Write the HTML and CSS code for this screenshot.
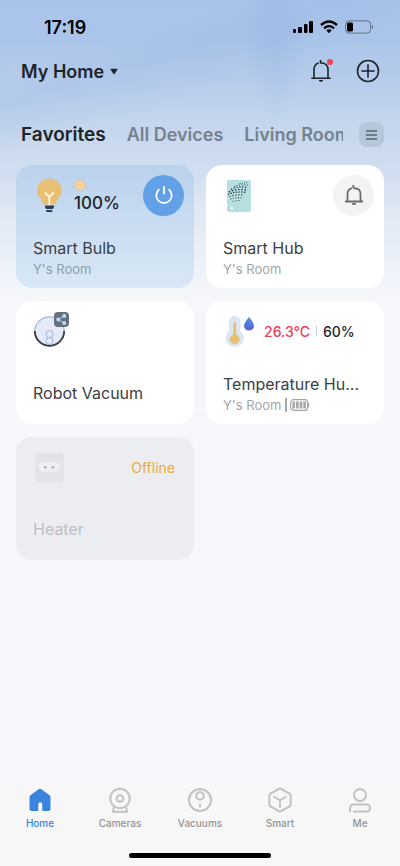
FILE: index.html
```html
<!DOCTYPE html>
<html lang="en">
<head>
<meta charset="utf-8">
<meta name="viewport" content="width=device-width, initial-scale=1">
<title>My Home</title>
<link rel="stylesheet" href="styles.css">
</head>
<body>
<div class="app">
  <div class="status">
    <span class="time">17:19</span>
    <div class="signals">
      <svg width="20" height="14" viewBox="0 0 20 14"><rect x="0" y="9" width="3" height="4" rx="1"/><rect x="5" y="7" width="4" height="6" rx="1"/><rect x="11" y="4" width="3.500" height="9" rx="1"/><rect x="16" y="1" width="4" height="12" rx="1"/></svg>
      <svg width="18" height="14" viewBox="0 0 18 14"><path d="M1 5Q9-2 17 5" fill="none" stroke="#000" stroke-width="2.400"/><path d="M4 8.300Q9 4 14 8.300" fill="none" stroke="#000" stroke-width="2.200"/><path d="M6.300 10.300Q9 8.300 11.700 10.300L9 13.200z"/></svg>
      <svg width="28" height="14" viewBox="0 0 28 14"><rect x=".6" y=".9" width="25" height="12.200" rx="3.500" fill="none" stroke="#000" stroke-opacity=".42"/><rect x="2" y="2.500" width="6" height="9" rx="1.500"/><path d="M27 5v4q1-.5 1-2t-1-2" fill-opacity=".5"/></svg>
    </div>
  </div>
  <header class="header">
    <button class="home-switch" type="button">My Home
      <svg width="8" height="7" viewBox="0 0 8 7"><path d="M1 .8h6q.8.300.4 1L4.600 5.800q-.6.700-1.200 0L.6 1.800q-.4-.7.400-1z" fill="#1d2529"/></svg>
    </button>
    <div class="actions">
      <button class="icon-button" type="button" aria-label="Notifications">
        <svg width="24" height="26" viewBox="0 0 24 26" fill="none" stroke="#1d2529" stroke-width="1.600"><path d="M2.300 20.200h19.400M5 20V11.500Q5 6.500 9.700 5M12 4.700Q19 5.300 19 11.500V20M11.500 2v2.500l1.600 1.200"/><path d="M10 22.500q2 1.600 4 0z" fill="#1d2529" stroke-width="1"/></svg>
        <span class="dot"></span>
      </button>
      <button class="icon-button" type="button" aria-label="Add">
        <svg width="24" height="24" viewBox="0 0 24 24" fill="none" stroke="#1d2529" stroke-width="1.600"><circle cx="12" cy="12" r="10.500"/><path d="M12 5.300v13.400M5.300 12h13.400"/></svg>
      </button>
    </div>
  </header>
  <div class="tabs">
    <nav class="tab-list" aria-label="Rooms">
      <a class="tab active" href="#favorites">Favorites</a>
      <a class="tab" href="#devices">All Devices</a>
      <a class="tab" href="#living">Living Room</a>
    </nav>
    <button class="menu" type="button" aria-label="Menu">
      <svg width="11" height="10" viewBox="0 0 11 10" stroke="#58656f" stroke-width="1.400"><path d="M0 1h11M0 5h11M0 9h11"/></svg>
    </button>
  </div>
  <main class="grid">
    <article class="card on">
      <div class="top">
        <svg class="device" viewBox="0 0 32 36"><path d="M16.300 1.500a12.300 12.300 0 0 1 12.300 12.300c0 6-4.600 7.500-6.300 13.700h-12C8.600 21.300 4 19.800 4 13.800A12.300 12.300 0 0 1 16.300 1.500z" fill="#e8c074"/><path d="M16.300 28v-8.500M11.800 15.500l4.500 4.200 4.500-4.200" fill="none" stroke="#fbf1df" stroke-width="1.900"/><path d="M12 28.500h9v1.500q0 2-2 2h-5q-2 0-2-2z" fill="#2d3d5c"/><rect x="13" y="33" width="6.500" height="2" rx="1" fill="#2d3d5c"/></svg>
        <div class="level"><span class="swatch"></span><strong>100%</strong></div>
        <button class="round power" type="button" aria-label="Power">
          <svg width="20" height="20" viewBox="0 0 20 20" fill="none" stroke="#fff" stroke-width="1.800"><path d="M5.300 4.200a7.700 7.700 0 1 0 9.400 0M10 1.200v8"/></svg>
        </button>
      </div>
      <div class="info"><h2>Smart Bulb</h2><p>Y's Room</p></div>
    </article>
    <article class="card">
      <div class="top">
        <svg class="device" viewBox="0 0 32 36"><rect x="4" y="3" width="24" height="32" rx="2" fill="#b8dfdf"/><g fill="none" stroke="#263f42" stroke-linecap="round"><path d="M17 6.500l7-.8" stroke-width=".9" stroke-dasharray=".1 2.100"/><path d="M11.500 9.500q6-2.500 13-1.500" stroke-width="1.100" stroke-dasharray=".1 2.500"/><path d="M8.500 12.200q7-3.400 15.500-1.700" stroke-width="1.400" stroke-dasharray=".1 2.800"/><path d="M6.500 14.700q8-3.400 16.500-1.700" stroke-width="1.600" stroke-dasharray=".1 3.100"/><path d="M5.500 17.200q8-3.200 17-1.700" stroke-width="1.500" stroke-dasharray=".1 2.600"/><path d="M7 19.500q7-2.500 14-1.500" stroke-width="1.300" stroke-dasharray=".1 2.900"/><path d="M8 22q5-1.800 11-1.200" stroke-width="1.100" stroke-dasharray=".1 2.400"/><path d="M9.500 24.500q4-1.300 7-1" stroke-width=".9" stroke-dasharray=".1 2.100"/></g><rect x="8" y="30" width="2" height="2" rx=".5" fill="#fff"/></svg>
        <button class="round" type="button" aria-label="Alarm">
          <svg width="20" height="22" viewBox="0 0 20 22" fill="none" stroke="#696c6e" stroke-width="1.800"><path d="M1 17.500h18M3.500 17.500V10Q3.500 5.500 8 4.200M10 4.200Q16.500 4.500 16.500 10V17.500M9.300 1v2.500l2 1.300"/><path d="M8 19.700q2 1.600 4 0z" fill="#696c6e" stroke-width="1"/></svg>
        </button>
      </div>
      <div class="info"><h2>Smart Hub</h2><p>Y's Room</p></div>
    </article>
    <article class="card">
      <div class="top">
        <div class="shared">
          <svg class="device" viewBox="0 0 32 36"><circle cx="16.500" cy="18.500" r="14.700" fill="#e4eaf7" stroke="#a5b8da" stroke-width="1.300"/><path d="M1.800 18a14.700 14.700 0 0 0 29.400 0" fill="none" stroke="#404042" stroke-width="1.900"/><g fill="none" stroke="#a5b8da" stroke-width="1.100"><path d="M15 24.200a3.400 3.400 0 1 1 3.200 0"/><circle cx="16.500" cy="28" r="3.400"/></g></svg>
          <svg class="share" width="15" height="15" viewBox="0 0 15 15"><rect width="15" height="15" rx="4" fill="#66717b"/><path d="M10 4L4.300 7.500 10 11" fill="none" stroke="#a6cfea"/><g fill="#b3ddf7"><circle cx="10.200" cy="4" r="2"/><circle cx="4.300" cy="7.500" r="2"/><circle cx="10.200" cy="11" r="2"/></g></svg>
        </div>
      </div>
      <div class="info"><h2>Robot Vacuum</h2></div>
    </article>
    <article class="card">
      <div class="top">
        <svg class="device" viewBox="0 0 32 36"><defs><linearGradient id="drop" x2="0" y2="1"><stop stop-color="#5790e4"/><stop offset="1" stop-color="#565fd3"/></linearGradient></defs><path d="M6 8.500a5.700 5.700 0 0 1 11.400 0v9.600a9 9 0 1 1-11.400 0z" fill="#dce5f4"/><path d="M10.200 10.500q0-1.500 1.500-1.500t1.500 1.500v11a5 5 0 1 1-3 0z" fill="#e8c074"/><path d="M26 4q-5 6-5 9a5 4.600 0 0 0 10 0q0-3-5-9z" fill="url(#drop)"/></svg>
        <div class="readings"><span class="hot">26.3°C</span><span class="rule"></span><span>60%</span></div>
      </div>
      <div class="info"><h2>Temperature Hu...</h2><p>Y's Room <span class="bar"></span><svg width="20" height="12" viewBox="0 0 20 12"><rect x=".7" y=".7" width="17" height="10.600" rx="3" fill="none" stroke="#a3a5a7" stroke-width="1.200"/><path d="M3.800 2.500v7M7.400 2.500v7M11 2.500v7M14.600 2.500v7" stroke="#a3a5a7" stroke-width="2.600"/><path d="M18.500 4v4" stroke="#a3a5a7" stroke-width="1.300"/></svg></p></div>
    </article>
    <article class="card off">
      <div class="top">
        <svg class="device" viewBox="0 0 32 36"><rect x="2" y="4" width="29" height="29" rx="4" fill="#e2e4e8"/><path d="M9 13h14q1.500 0 2.300 1.500l1.700 3.500-1.700 3.500Q24.500 23 23 23H9q-1.500 0-2.300-1.500L5.500 18l1.200-3.500Q7.500 13 9 13z" fill="#eeeff2"/><circle cx="12.300" cy="18.300" r="1.400" fill="#b0b3b8"/><circle cx="20" cy="18.300" r="1.400" fill="#b0b3b8"/></svg>
        <span class="offline">Offline</span>
      </div>
      <div class="info"><h2>Heater</h2></div>
    </article>
  </main>
  <footer class="bottom">
    <nav class="nav" aria-label="Main">
      <a class="nav-item current" href="#home"><svg width="26" height="26" viewBox="0 0 26 26"><path d="M11.200 2.500q1.800-1.300 3.600 0l7.700 5.800Q23.500 9 23.500 10.500V22q0 2-2 2h-6.200v-6.500q0-2.300-2-2.300t-2 2.300V24H4.500q-2 0-2-2V10.500q0-1.500 1-2.200z" fill="#3a84dd"/></svg>Home</a>
      <a class="nav-item" href="#cameras"><svg width="26" height="26" viewBox="0 0 26 26"><circle cx="13" cy="11.500" r="9.700"/><circle cx="13" cy="11.500" r="3.300"/><path d="M7 19.500L6 24.700h14l-1-5.200"/></svg>Cameras</a>
      <a class="nav-item" href="#vacuums"><svg width="26" height="26" viewBox="0 0 26 26"><circle cx="13" cy="13" r="11"/><circle cx="13" cy="8.800" r="3.800"/><path d="M13 16.800v3.700"/></svg>Vacuums</a>
      <a class="nav-item" href="#smart"><svg width="26" height="26" viewBox="0 0 26 26"><path d="M11.800 1.900q1.200-.6 2.400 0l8.300 4.700q1.200.7 1.200 2v8.800q0 1.300-1.200 2l-8.300 4.700q-1.200.6-2.400 0l-8.300-4.700q-1.200-.7-1.200-2V8.600q0-1.300 1.200-2zM6.500 9.500L13 13.200l6.500-3.700M13 13v7.500"/></svg>Smart</a>
      <a class="nav-item" href="#me"><svg width="26" height="26" viewBox="0 0 26 26"><circle cx="13" cy="8" r="6"/><path d="M3 25v-3.500q0-4 4-4h12q4 0 4 3.500t-3.500 3.500H6"/></svg>Me</a>
    </nav>
    <div class="indicator"></div>
  </footer>
</div>
</body>
</html>
```
FILE: styles.css
```css
* { box-sizing: border-box; }
body {
  margin: 0;
  font-family: Inter, "Liberation Sans", sans-serif;
  color: #1d2529;
  background: #f5f7fb;
}
button { padding: 0; border: 0; background: none; font: inherit; color: inherit; }
a { color: inherit; text-decoration: none; }
svg { display: block; flex: none; }
h2, p { margin: 0; font-weight: 400; }
.app {
  min-height: 100vh;
  display: flex;
  flex-direction: column;
  background:
    linear-gradient(163deg, rgba(155, 186, 228, 0) 70px, rgba(155, 186, 228, .3) 100px, rgba(155, 186, 228, 0) 150px) no-repeat 0 0 / 100% 300px,
    radial-gradient(ellipse 32px 90px at 69% 30px, rgba(145, 178, 224, .4), rgba(145, 178, 224, 0)) no-repeat 0 0 / 100% 160px,
    linear-gradient(#a9c3ea 0, #abc5ea 40px, #b7cceb 80px, #c5d6ed 125px, #cfddf0 165px, #e2eaf5 220px, #f5f7fb 300px);
}
.status {
  display: flex;
  align-items: center;
  justify-content: space-between;
  height: 54px;
  padding: 0 27px 0 44px;
  color: #000;
}
.time { font-size: 18px; font-weight: 600; }
.signals { display: flex; align-items: center; gap: 7px; }
.header {
  display: flex;
  align-items: center;
  justify-content: space-between;
  height: 34px;
  padding: 0 20px 0 21px;
}
.home-switch { display: flex; align-items: center; gap: 6px; font-size: 18px; font-weight: 600; }
.actions { display: flex; align-items: center; gap: 23px; }
.icon-button { position: relative; }
.dot {
  position: absolute;
  top: 1px;
  right: 0;
  width: 6px;
  height: 6px;
  border-radius: 50%;
  background: #f14458;
}
.tabs {
  display: flex;
  align-items: center;
  gap: 16px;
  height: 77px;
  padding: 16px 16px 0 21px;
}
.tab-list { flex: 1; display: flex; align-items: baseline; gap: 21px; overflow: hidden; }
.tab {
  white-space: nowrap;
  font-size: 18px;
  font-weight: 600;
  line-height: 26px;
  color: #74818f;
}
.tab.active { font-size: 19px; color: #1d2529; }
.menu {
  display: flex;
  align-items: center;
  justify-content: center;
  width: 25px;
  height: 25px;
  border-radius: 8px;
  background: #b7c7da;
}
.grid {
  flex: 1;
  display: grid;
  grid-template-columns: 1fr 1fr;
  align-content: start;
  gap: 13px 12px;
  padding: 0 16px 24px;
}
.card {
  min-width: 0;
  padding: 0 10px 10px 17px;
  border-radius: 16px;
  background: #fff;
}
.card.on { background: linear-gradient(#bbd2ed, #d9e8f6); }
.card.off { background: #ecedf1; }
.top { display: flex; align-items: center; gap: 9px; height: 60px; }
.device { width: 32px; height: 36px; }
.shared { position: relative; }
.share { position: absolute; top: -1px; right: -4px; }
.level { padding-top: 4px; font-size: 17px; line-height: 24px; }
.level strong { display: block; font-weight: 500; }
.swatch {
  display: block;
  width: 12px;
  height: 12px;
  border: 1px solid #b9c6d4;
  border-radius: 50%;
  background: #fad19b;
}
.round {
  display: flex;
  align-items: center;
  justify-content: center;
  width: 41px;
  height: 41px;
  margin-left: auto;
  border-radius: 50%;
  background: #f3f3f3;
}
.round.power { background: #62a1e7; }
.readings { display: flex; align-items: center; gap: 6px; font-size: 14px; font-weight: 500; }
.hot { color: #ea3d58; }
.rule { width: 1px; height: 10px; background: #c8cacd; }
.offline { margin: 0 9px 0 auto; font-size: 14px; color: #e8aa45; }
.info {
  display: flex;
  flex-direction: column;
  justify-content: center;
  height: 42px;
  margin-top: 11px;
}
.info h2 {
  overflow: hidden;
  text-overflow: ellipsis;
  white-space: nowrap;
  font-size: 16px;
  line-height: 24px;
  color: #3a4146;
}
.info p {
  display: flex;
  align-items: center;
  font-size: 13px;
  line-height: 18px;
  color: #a3a5a7;
}
.on .info p { color: #8d9eae; }
.off .info h2 { color: #bcbec3; }
.bar { width: 2px; height: 14px; margin: 0 3px 0 4px; background: #a3a5a7; }
.bottom { padding-top: 8px; background: #f7f7f7; }
.nav { display: grid; grid-template-columns: repeat(5, 1fr); }
.nav-item {
  display: flex;
  flex-direction: column;
  align-items: center;
  gap: 3px;
  font-size: 10px;
  font-weight: 500;
  line-height: 14px;
  color: #939393;
}
.nav-item svg { fill: none; stroke: #c2c2c2; stroke-width: 2; }
.nav-item.current { color: #3a84dd; }
.nav-item.current svg { stroke: none; }
.indicator {
  width: 142px;
  height: 5px;
  margin: 23px auto 8px;
  border-radius: 3px;
  background: #000;
}
```
